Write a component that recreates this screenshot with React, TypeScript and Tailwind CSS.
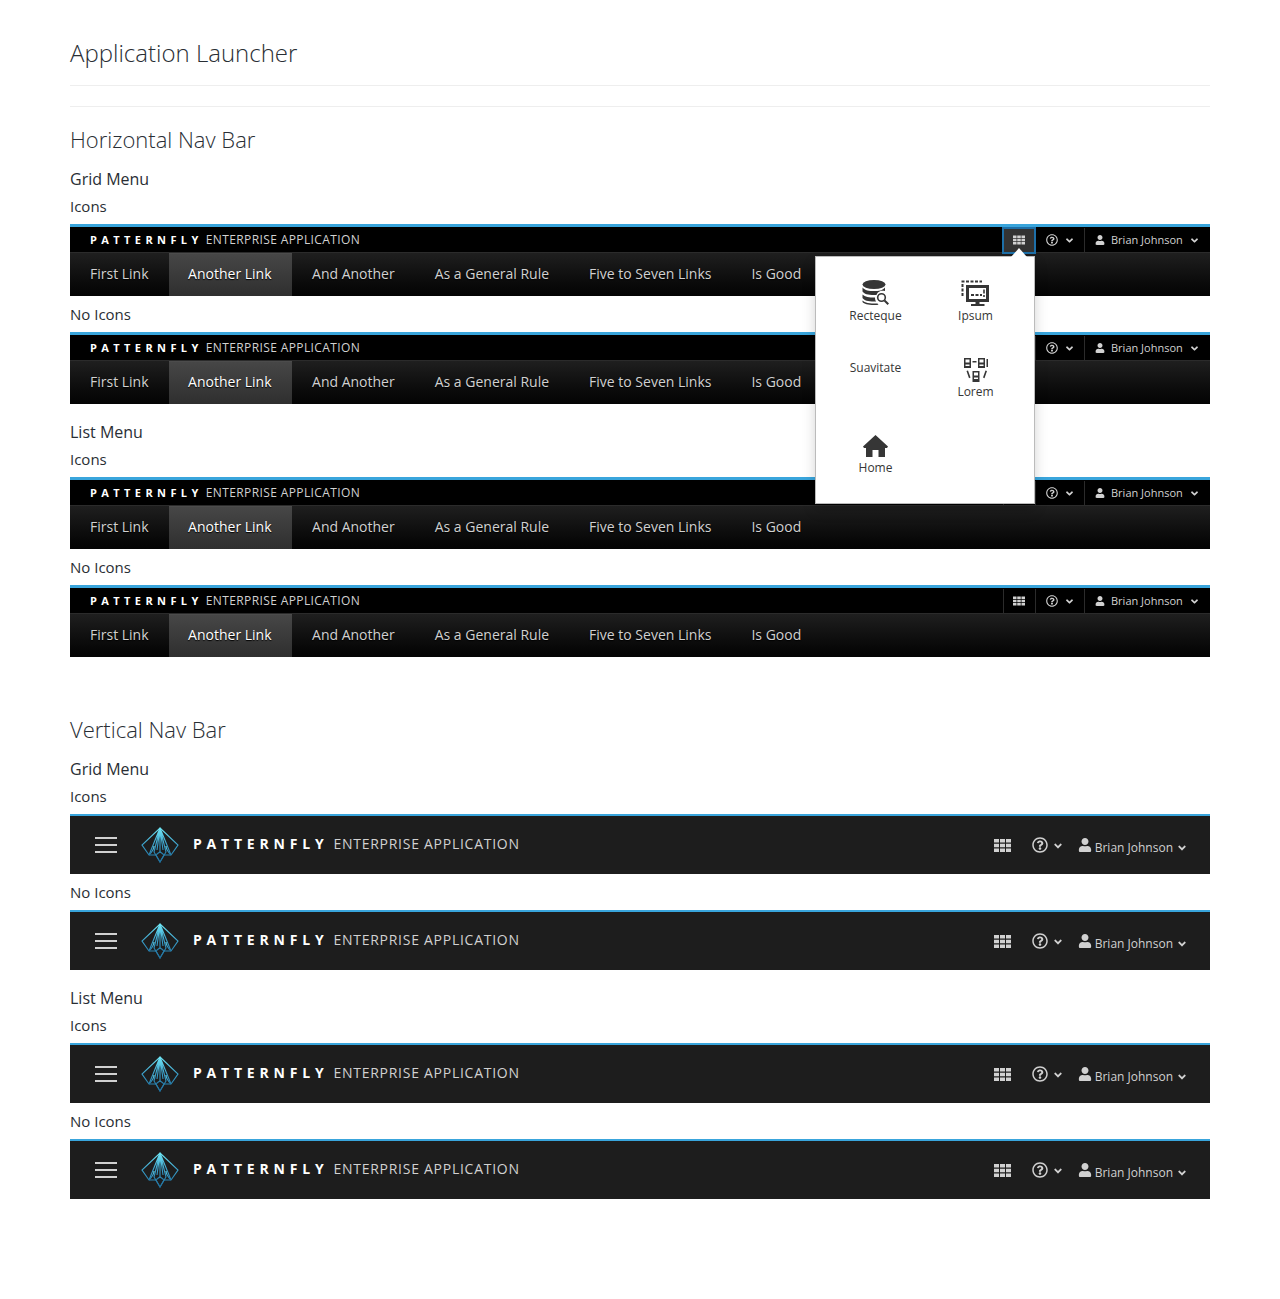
import React from "react";
import { FaAngleDown, FaRegQuestionCircle, FaUser } from "react-icons/fa";

const links = ["First Link", "Another Link", "And Another", "As a General Rule", "Five to Seven Links", "Is Good"];

const GridIcon = ({ className }: { className: string }) => (
  <svg className={className} viewBox="0 0 17 13" fill="currentColor">
    <path d="M0 0h5v3.500H0zM6 0h5v3.500H6zM12 0h5v3.500h-5zM0 4.700h5v3.600H0zM6 4.700h5v3.600H6zM12 4.700h5v3.600h-5zM0 9.500h5V13H0zM6 9.500h5V13H6zM12 9.500h5V13h-5z" />
  </svg>
);

const HomeIcon = () => (
  <svg width="25" height="22" viewBox="0 0 25 22" fill="#363636">
    <path d="M12.500 0L25 11.500l-1 1.500h-2v9h-6.500v-7h-6v7H3v-9H1l-1-1.500z" />
  </svg>
);

const DatabaseIcon = () => (
  <svg width="27" height="27" viewBox="0 0 27 27" fill="#363636">
    <ellipse cx="12" cy="4.500" rx="11.500" ry="4.500" />
    <path d="M.5 7.500C3 10.500 7 11 12 11s8.500-.5 11-3.500V11c-1.500-.5-3-.5-4.500 0-2 .8-3.500 2-4 4H12C6 15 2 14 .5 11.500z" />
    <path d="M.5 14.500C3 17 7 17.500 13 17.500c0 1.500.3 3 1.200 4H12c-6 0-10-1-11.500-3.500z" />
    <path d="M.5 20.500C3 23 7 23.500 15.500 23.500l1 1.300c-1.500.2-3 .2-4.500.2-6 0-10-1-11.500-3z" />
    <circle cx="19.500" cy="17.500" r="3.800" fill="none" stroke="#363636" strokeWidth="1.600" />
    <path d="M22.500 20.500l3.800 3.800" stroke="#363636" strokeWidth="2" />
  </svg>
);

const MonitorIcon = () => (
  <svg width="29" height="27" viewBox="0 0 29 27" fill="none">
    <path d="M1.500 16V1.500H21" stroke="#363636" strokeWidth="2" strokeDasharray="3 1.500" />
    <path d="M5 5h23v17H5z" fill="#363636" />
    <path d="M8 8h17v11H8z" fill="#fff" />
    <path d="M10 15h3M14.500 15h3M19 15h2" stroke="#363636" strokeWidth="2" />
    <path d="M23 9.500v4M23 15v2" stroke="#363636" strokeWidth="1.600" />
    <path d="M14.500 22h4v2h-4zM10 24h13.500v2H10z" fill="#363636" />
  </svg>
);

const ClusterIcon = () => (
  <svg width="26" height="25" viewBox="0 0 26 25" fill="#363636">
    <path fillRule="evenodd" d="M1 1h7v10H1zM2.500 2.500v3h4v-3zM2.500 7.500v1.500h4V7.500z" />
    <path fillRule="evenodd" d="M15 1h7v10h-7zM16.500 2.500v3h4v-3zM16.500 7.500v1.500h4V7.500z" />
    <path fillRule="evenodd" d="M9.500 14h7v11h-7zM11 15.500v3h4v-3zM11 20.500V22h4v-1.500z" />
    <path d="M9.500 4h4v1.500h-4zM23.500 2H25v8h-1.500zM3.500 14l1.500-.6 2.500 7-1.500.8zM24 14l-1.500-.6-2.500 7 1.500.8z" />
  </svg>
);

const Logo = () => (
  <svg width="38" height="36" viewBox="0 0 38 36" fill="none" strokeWidth="1.100">
    <defs>
      <linearGradient id="pfly" x1="0" y1="0" x2="0" y2="1">
        <stop offset="0" stopColor="#6fe6f5" />
        <stop offset="0.500" stopColor="#3aa0cc" />
        <stop offset="1" stopColor="#1f6f9c" />
      </linearGradient>
    </defs>
    <g stroke="url(#pfly)">
      <path d="M19 1L37 18l-7 10H23l-4 7-4-7H8L1 18z" />
      <path d="M19 1L8 28M19 1l11 27M19 1l-6 24 6 10 6-10zM19 1v24M19 1l-3 22M19 1l3 22" />
      <path d="M8 28c3-3 5-6 5-9M30 28c-3-3-5-6-5-9M15 28c2-2 4-3 4-3s2 1 4 3" />
    </g>
  </svg>
);

const AppMenu = () => (
  <div className="absolute right-0 top-[28px] z-10 grid h-[248px] w-[220px] grid-cols-[99px_101px] content-start border border-[#bbb] bg-white pl-[10px] text-[12px] text-[#363636] shadow-[0_6px_12px_rgba(0,0,0,0.175)]">
    <div className="flex h-[76px] flex-col items-center pt-[23px]">
      <DatabaseIcon />
      <span className="leading-[17px]">Recteque</span>
    </div>
    <div className="flex h-[76px] flex-col items-center pt-[23px]">
      <MonitorIcon />
      <span className="leading-[17px]">Ipsum</span>
    </div>
    <div className="flex h-[76px] flex-col items-center pt-[26px]">
      <span className="leading-[17px]">Suavitate</span>
    </div>
    <div className="flex h-[76px] flex-col items-center pt-[24px]">
      <ClusterIcon />
      <span className="mt-[1px] leading-[17px]">Lorem</span>
    </div>
    <div className="flex h-[76px] flex-col items-center pt-[26px]">
      <HomeIcon />
      <span className="mt-[2px] leading-[17px]">Home</span>
    </div>
  </div>
);

const Launcher = ({ open }: { open?: boolean }) => (
  <div className="relative flex h-[25px] w-[32px] items-center justify-center">
    {open ? (
      <div className="absolute -inset-x-px -top-px -bottom-px border-2 border-[#1d6fa8] bg-[#333]" />
    ) : (
      <div className="absolute inset-y-0 left-0 w-px bg-[#2b2b2b]" />
    )}
    <GridIcon className="relative h-[10px] w-[12px] text-[#d1d1d1]" />
    {open && <div className="absolute -bottom-[4px] left-[8px] z-20 h-0 w-0 border-x-[8px] border-b-[9px] border-x-transparent border-b-white" />}
    {open && <AppMenu />}
  </div>
);

const HorizontalBar = ({ open }: { open?: boolean }) => (
  <div className="border-t-[3px] border-[#39a5dc] bg-black">
    <div className="flex h-[25px] items-center justify-between">
      <div className="flex items-center pl-5 text-[12px] leading-none text-[#d1d1d1]">
        <span className="mr-[3px] text-[11px] font-bold tracking-[4.400px] text-white">PATTERNFLY</span>
        <span className="tracking-[0.390px]">ENTERPRISE APPLICATION</span>
      </div>
      <div className="flex h-full items-center pt-px text-[11px] text-[#d1d1d1]">
        <Launcher open={open} />
        <div className="flex h-full w-[49px] items-center justify-center gap-[6px] border-l border-[#2b2b2b]">
          <FaRegQuestionCircle className="text-[12px]" />
          <FaAngleDown className="text-[11px]" />
        </div>
        <div className="flex h-full w-[126px] items-center gap-[6px] border-l border-[#2b2b2b] pl-[10px]">
          <FaUser className="text-[10px]" />
          <span>Brian Johnson</span>
          <FaAngleDown className="text-[11px]" />
        </div>
      </div>
    </div>
    <div className="flex h-[44px] border-t border-[#2b2b2b] bg-linear-to-b from-[#1f1f1f] to-[#040404] text-[14px] font-medium text-[#d1d1d1] [text-shadow:0_1px_1px_#000]">
      {links.map((link, i) => (
        <div
          key={link}
          className={
            i === 1
              ? "flex h-full items-center bg-linear-to-b from-[#474747] to-[#2f2f2f] pb-[2px] pl-[19.500px] pr-[20.500px] text-white shadow-[inset_0_1px_0_#4c4c4c]"
              : "flex h-full items-center px-[20px] pb-[2px]"
          }
        >
          {link}
        </div>
      ))}
    </div>
  </div>
);

const VerticalBar = () => (
  <div className="flex h-[60px] items-center justify-between border-t-2 border-[#39a5dc] bg-[#1d1d1d] text-[#d1d1d1]">
    <div className="flex items-center">
      <div className="ml-[25px] flex w-[22px] flex-col gap-[5px]">
        <div className="h-[2px] bg-[#d1d1d1]" />
        <div className="h-[2px] bg-[#d1d1d1]" />
        <div className="h-[2px] bg-[#d1d1d1]" />
      </div>
      <div className="ml-[24px]">
        <Logo />
      </div>
      <span className="ml-[14px] mb-[3px] text-[14px] font-bold tracking-[4.800px] text-white">PATTERNFLY</span>
      <span className="ml-[5px] mb-[3px] text-[14px] tracking-[0.730px]">ENTERPRISE APPLICATION</span>
    </div>
    <div className="flex items-center text-[12px] font-medium">
      <GridIcon className="h-[13px] w-[17px]" />
      <FaRegQuestionCircle className="ml-[21px] text-[16px]" />
      <FaAngleDown className="ml-[4px] mt-[2px] text-[12px]" />
      <FaUser className="ml-[14px] mb-[1px] text-[14px]" />
      <span className="ml-[3px] mt-[6px]">Brian Johnson</span>
      <FaAngleDown className="ml-[3px] mr-[22px] mt-[5px] text-[12px]" />
    </div>
  </div>
);

const Group = ({ title, bar, open }: { title: string; bar: "h" | "v"; open?: boolean }) => {
  const Bar = bar === "h" ? HorizontalBar : VerticalBar;
  return (
    <div>
      <h3 className="h-[28px] text-[16px] leading-[28px] text-[#292e34]">{title}</h3>
      <h4 className="h-[31px] text-[15px] leading-[26px] text-[#292e34]">Icons</h4>
      <Bar open={open} />
      <h4 className="mt-[5px] h-[31px] text-[15px] leading-[26px] text-[#292e34]">No Icons</h4>
      <Bar />
    </div>
  );
};

const App = () => {
  return (
    <div className="h-[1299px] bg-white px-[70px] font-['Open_Sans',sans-serif]">
      <h1 className="h-[86px] border-b border-[#eee] pt-[36px] text-[24px] font-light leading-[33px] text-[#292e34]">
        Application Launcher
      </h1>
      <div className="mt-5 border-t border-[#eee]" />
      <div className="pt-[17px]">
        <h2 className="h-[36px] text-[22px] font-light leading-[30px] text-[#292e34]">Horizontal Nav Bar</h2>
        <div className="mt-[5px]">
          <Group title="Grid Menu" bar="h" open />
        </div>
        <div className="mt-[14px]">
          <Group title="List Menu" bar="h" />
        </div>
      </div>
      <div className="pt-[57px]">
        <h2 className="h-[36px] text-[22px] font-light leading-[30px] text-[#292e34]">Vertical Nav Bar</h2>
        <div className="mt-[5px]">
          <Group title="Grid Menu" bar="v" />
        </div>
        <div className="mt-[14px]">
          <Group title="List Menu" bar="v" />
        </div>
      </div>
    </div>
  );
};

export default App;
